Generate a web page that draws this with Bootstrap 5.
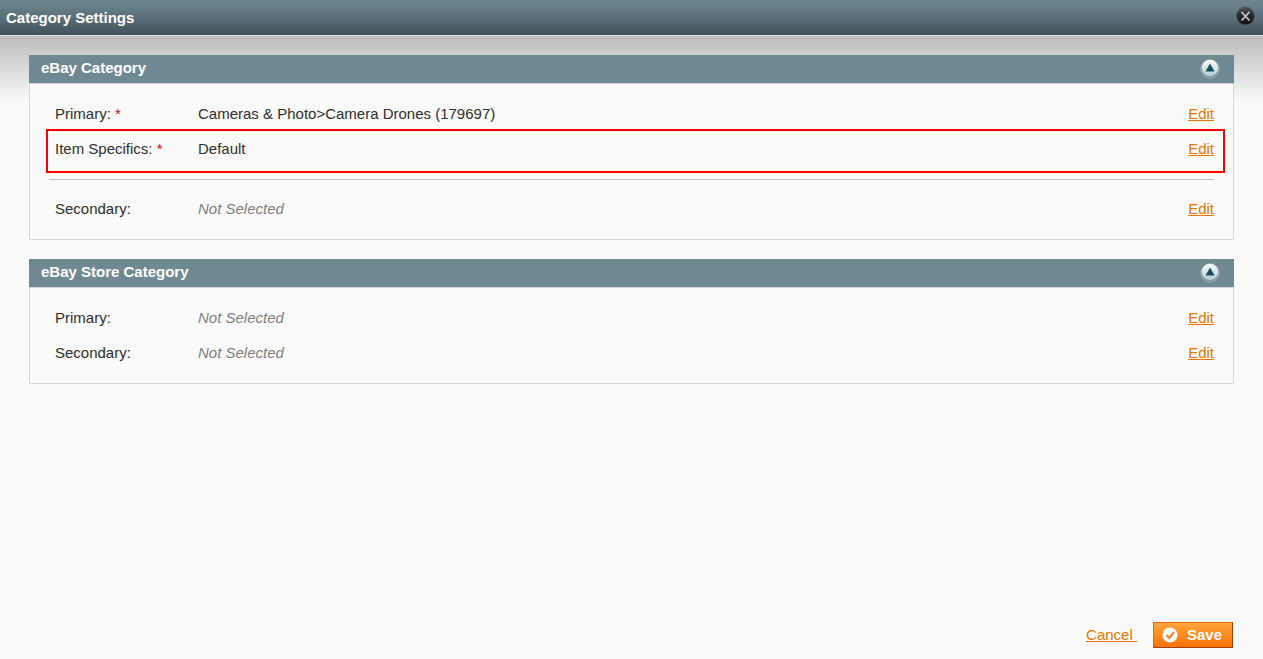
<!DOCTYPE html>
<html lang="en">
<head>
<meta charset="utf-8">
<meta name="viewport" content="width=device-width, initial-scale=1">
<title>Category Settings</title>
<link href="https://cdn.jsdelivr.net/npm/bootstrap@5.3.0/dist/css/bootstrap.min.css" rel="stylesheet">
<style>
body { font-family: "Liberation Sans", Arial, sans-serif; font-size: 15px; line-height: 20px; color: #2f2f2f; background: #fafafa; }
a { color: #ea7601; }
a:hover { color: #c46200; }
h1, h2 { font-size: 15px; line-height: 20px; font-weight: bold; color: #fff; }
.title-bar { height: 36px; padding: 0 8px 0 6px; background: linear-gradient(#6e878e, #59707a 50%, #425055); border-bottom: 1px solid #e8e8e8; }
.page-area { padding: 19px 30px 11px 29px; background: linear-gradient(#bcbcbc, #fafafa 66px); }
.panel { margin: 0 -1px 19px 0; }
.panel-head { height: 28px; padding: 0 14px 2px 12px; background: #6f8992; }
.panel-body { padding: 12px 19px 13px; border: 1px solid #d6d6d6; background: #fafafa; }
.setting { min-height: 35px; padding-left: 6px; }
.setting-name { width: 143px; }
.required { color: #d40707; }
.unset { color: #808080; font-style: italic; }
.separator { margin: 13px 0 11px; border-top: 1px solid #bdbdbd; opacity: 1; }
.highlight { position: absolute; top: -2px; left: -3px; right: -11px; height: 44px; border: 2px solid #fa0000; pointer-events: none; }
.icon-btn { padding: 0; border: 0; background: none; line-height: 0; }
.btn-save { height: 26px; padding: 0 10px 0 8px; font-size: 15px; line-height: 20px; font-weight: bold; color: #fff; background: linear-gradient(#ffa63f, #fb6f05) border-box; border: 1px solid; border-color: #ed6502 #a04300 #a04300 #ed6502; border-radius: 0; }
.btn-save:hover { color: #fff; background: #fb7a10; border-color: #a04300; }
</style>
</head>
<body>
<div class="d-flex flex-column min-vh-100">
  <header class="title-bar d-flex align-items-center justify-content-between">
    <h1 class="m-0">Category Settings</h1>
    <button type="button" class="icon-btn mb-1" aria-label="Close">
      <svg width="19" height="21" viewBox="0 0 19 21">
        <defs><linearGradient id="closeFill" x2="0" y2="1"><stop offset="0" stop-color="#4b565a"/><stop offset=".5" stop-color="#22282a"/><stop offset="1" stop-color="#101415"/></linearGradient></defs>
        <circle cx="9.500" cy="11" r="9" fill="url(#closeFill)" stroke="#46545a" stroke-width=".8"/>
        <path d="M5.500 7l8 8.500M13.500 7l-8 8.500" stroke="#c3cccf" stroke-width="1.700" fill="none"/>
      </svg>
    </button>
  </header>

  <main class="page-area flex-grow-1 d-flex flex-column">
    <section class="panel">
      <div class="panel-head d-flex align-items-center justify-content-between">
        <h2 class="m-0">eBay Category</h2>
        <button type="button" class="icon-btn mt-1" data-bs-toggle="collapse" data-bs-target="#ebayCategory" aria-expanded="true" aria-controls="ebayCategory" aria-label="Toggle eBay Category">
          <svg width="20" height="22" viewBox="0 0 20 22">
            <defs><linearGradient id="knobFill" x2="0" y2="1"><stop offset="0" stop-color="#fafdfd"/><stop offset="1" stop-color="#b4ccd1"/></linearGradient></defs>
            <circle cx="10" cy="10" r="9.300" fill="#7d979f" stroke="#93aab1"/>
            <circle cx="10" cy="9" r="8.300" fill="url(#knobFill)"/>
            <path d="M10 4.500L14.500 12.500h-9z" fill="#174d5e"/>
          </svg>
        </button>
      </div>
      <div id="ebayCategory" class="collapse show">
        <div class="panel-body">
          <div class="setting d-flex align-items-center">
            <span class="setting-name">Primary: <span class="required">*</span></span>
            <span class="flex-grow-1">Cameras &amp; Photo&gt;Camera Drones (179697)</span>
            <a href="#">Edit</a>
          </div>
          <div class="setting d-flex align-items-center position-relative">
            <span class="setting-name">Item Specifics: <span class="required">*</span></span>
            <span class="flex-grow-1">Default</span>
            <a href="#">Edit</a>
            <span class="highlight"></span>
          </div>
          <hr class="separator">
          <div class="setting d-flex align-items-center">
            <span class="setting-name">Secondary:</span>
            <span class="flex-grow-1 unset">Not Selected</span>
            <a href="#">Edit</a>
          </div>
        </div>
      </div>
    </section>

    <section class="panel">
      <div class="panel-head d-flex align-items-center justify-content-between">
        <h2 class="m-0">eBay Store Category</h2>
        <button type="button" class="icon-btn mt-1" data-bs-toggle="collapse" data-bs-target="#storeCategory" aria-expanded="true" aria-controls="storeCategory" aria-label="Toggle eBay Store Category">
          <svg width="20" height="22" viewBox="0 0 20 22">
            <circle cx="10" cy="10" r="9.300" fill="#7d979f" stroke="#93aab1"/>
            <circle cx="10" cy="9" r="8.300" fill="url(#knobFill)"/>
            <path d="M10 4.500L14.500 12.500h-9z" fill="#174d5e"/>
          </svg>
        </button>
      </div>
      <div id="storeCategory" class="collapse show">
        <div class="panel-body">
          <div class="setting d-flex align-items-center">
            <span class="setting-name">Primary:</span>
            <span class="flex-grow-1 unset">Not Selected</span>
            <a href="#">Edit</a>
          </div>
          <div class="setting d-flex align-items-center">
            <span class="setting-name">Secondary:</span>
            <span class="flex-grow-1 unset">Not Selected</span>
            <a href="#">Edit</a>
          </div>
        </div>
      </div>
    </section>

    <footer class="mt-auto d-flex align-items-center justify-content-end gap-3">
      <a href="#">Cancel&nbsp;</a>
      <button type="button" class="btn btn-save d-flex align-items-center">
        <svg class="me-2" width="17" height="16" viewBox="0 0 17 16">
          <circle cx="8" cy="8" r="7.600" fill="#fff"/>
          <path d="M4.500 8l2.800 3L12 5" stroke="#f58a3c" stroke-width="2.200" fill="none"/>
        </svg>
        Save
      </button>
    </footer>
  </main>
</div>
<script src="https://cdn.jsdelivr.net/npm/bootstrap@5.3.0/dist/js/bootstrap.bundle.min.js"></script>
</body>
</html>
